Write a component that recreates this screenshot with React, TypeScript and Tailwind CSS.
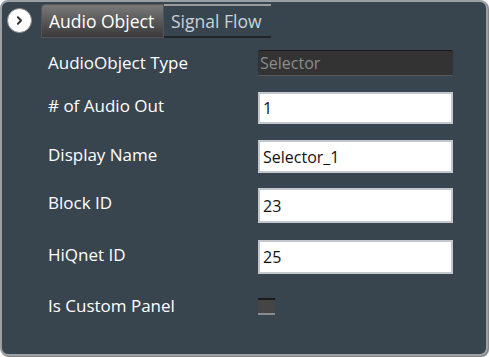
import { ChevronRight } from "lucide-react";

const font = { fontFamily: '"Open Sans", "Noto Sans", sans-serif' };

const Field = ({ value }: { value: string }) => (
  <div className="flex h-full w-[195px] items-center border-2 border-[#c4c8cc] bg-white pl-[3px] text-[16px] text-[#111]">
    {value}
  </div>
);

const Row = ({ label, className, lift = "-mt-[4px]", children }: { label: string; className: string; lift?: string; children: React.ReactNode }) => (
  <div className={`flex items-center ${className}`}>
    <div className={`w-[210px] ${lift}`}>{label}</div>
    {children}
  </div>
);

export default function App() {
  return (
    <div className="h-[357px] w-[489px] bg-white" style={font}>
      <div className="h-[356px] w-[488px] rounded-[8px] border-2 border-[#9aa0a4] bg-[#38454f] shadow-[1px_1px_1px_#777]">
        {/* header */}
        <div className="flex h-[38px] items-start pt-[2px]">
          <div className="ml-[5px] mt-[4px] flex h-[25px] w-[25px] items-center justify-center rounded-full border border-[#888] bg-white">
            <ChevronRight className="h-[13px] w-[13px] text-[#333]" strokeWidth={3.5} />
          </div>
          <div className="ml-[9px] flex h-[34px] w-[123px] items-center rounded-tl-[4px] border border-[#555] bg-gradient-to-b from-[#7a7a7a] to-[#3a3a3a] pl-[7px] text-[17.5px] text-white">
            Audio Object
          </div>
          <div className="flex h-[34px] w-[107px] items-center border-t-2 border-b-2 border-t-[#9a9a9a] border-b-[#1f2529] bg-[#38454f] pl-[7px] text-[17.5px] text-[#c9d2da]">
            Signal Flow
          </div>
        </div>

        <div className="flex flex-col pl-[46px] text-[17px] text-white">
          <Row label="AudioObject Type" className="mt-[10px] h-[26px]" lift="">
            <div className="flex h-full w-[195px] items-center rounded-[2px] border-t border-b border-t-[#1a1a1a] border-b-[#5a5a5a] bg-[#333] pl-[2px] text-[16px] text-[#8c8c8c]">
              Selector
            </div>
          </Row>
          <Row label="# of Audio Out" className="mt-[16px] h-[32px]">
            <Field value="1" />
          </Row>
          <Row label="Display Name" className="mt-[16px] h-[33px]">
            <Field value="Selector_1" />
          </Row>
          <Row label="Block ID" className="mt-[15px] h-[35px]" lift="-mt-[6px]">
            <Field value="23" />
          </Row>
          <Row label="HiQnet ID" className="mt-[17px] h-[34px]">
            <Field value="25" />
          </Row>
          <Row label="Is Custom Panel" className="mt-[24px] h-[17px]" lift="-mt-[2px]">
            <div className="h-[17px] w-[17px] border-t-2 border-b-2 border-t-[#1c1c1c] border-b-[#8a8a8a] bg-[#454545]" />
          </Row>
        </div>
      </div>
    </div>
  );
}
